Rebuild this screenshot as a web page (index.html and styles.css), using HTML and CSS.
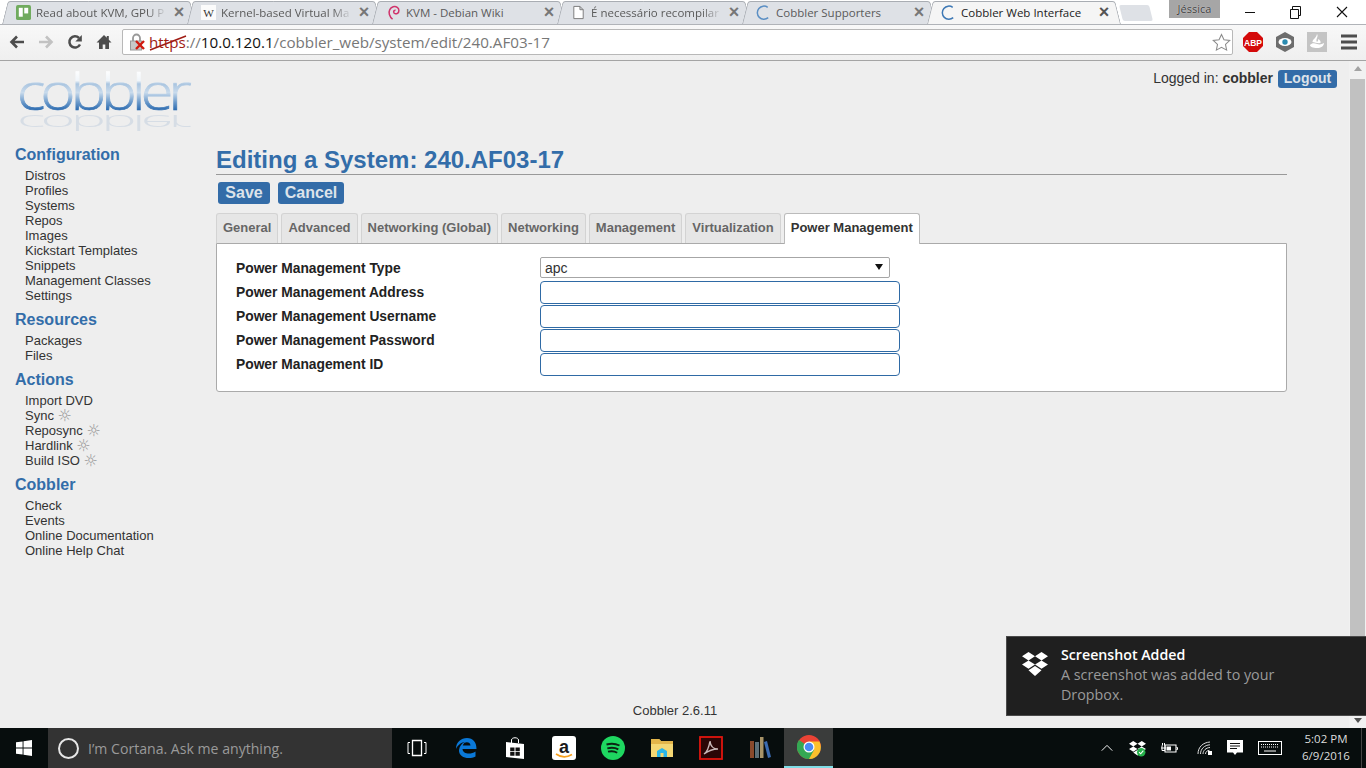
FILE: index.html
```html
<!DOCTYPE html>
<html lang="en">
<head>
<meta charset="utf-8">
<title>Cobbler Web Interface</title>
<link rel="stylesheet" href="styles.css">
</head>
<body>
<div class="desktop">
  <div class="titlebar">
    <div class="tabs">
      <div class="tab">
        <svg class="fav" viewBox="0 0 16 16"><rect width="16" height="16" rx="2" fill="#70ab5e"/><rect x="3" y="3" width="4.2" height="9.5" fill="#fff"/><rect x="8.8" y="3" width="4.2" height="6" fill="#fff"/></svg>
        <span class="tab-title">Read about KVM, GPU P</span><span class="tab-x">×</span>
      </div>
      <div class="tab">
        <svg class="fav" viewBox="0 0 16 16"><rect width="16" height="16" fill="#fbfbfb"/><text x="8" y="13" text-anchor="middle" class="wiki-w">W</text></svg>
        <span class="tab-title">Kernel-based Virtual Ma</span><span class="tab-x">×</span>
      </div>
      <div class="tab">
        <svg class="fav" viewBox="0 0 16 16"><path d="M7 15C3.500 12.500 2.500 8 4 5c1.500-3.200 5.500-4.200 8-2.500 2.300 1.600 2.300 5 .2 6.400-1.700 1.100-3.900.3-4-1.500-.1-1.300 1-2 2-1.800" fill="none" stroke="#d0336b" stroke-width="1.600"/></svg>
        <span class="tab-title">KVM - Debian Wiki</span><span class="tab-x">×</span>
      </div>
      <div class="tab">
        <svg class="fav" viewBox="0 0 16 16"><path d="M3 1.500h6.500L13 5v9.500H3z M9.500 1.500V5H13" fill="#fff" stroke="#777" stroke-width="1"/></svg>
        <span class="tab-title">É necessário recompilar</span><span class="tab-x">×</span>
      </div>
      <div class="tab">
        <svg class="fav" viewBox="0 0 16 16"><path d="M12.500 2.500A7 7 0 1 0 13 13.500" fill="none" stroke="#5b8fc4" stroke-width="1.600"/></svg>
        <span class="tab-title">Cobbler Supporters</span><span class="tab-x">×</span>
      </div>
      <div class="tab tab-active">
        <svg class="fav" viewBox="0 0 16 16"><path d="M12.500 2.500A7 7 0 1 0 13 13.500" fill="none" stroke="#3d78b5" stroke-width="1.600"/></svg>
        <span class="tab-title">Cobbler Web Interface</span><span class="tab-x">×</span>
      </div>
      <div class="newtab"></div>
    </div>
    <div class="profile">Jéssica</div>
    <div class="winctl">
      <svg class="winbtn" viewBox="0 0 46 24"><path d="M18 12.500h10" stroke="#111" stroke-width="1"/></svg>
      <svg class="winbtn" viewBox="0 0 46 24"><path d="M17.500 9.500h8v9h-8z M19.500 9.500v-3h8v9h-2" fill="none" stroke="#111" stroke-width="1"/></svg>
      <svg class="winbtn" viewBox="0 0 46 24"><path d="M18 7l10 10M28 7L18 17" stroke="#111" stroke-width="1.100"/></svg>
    </div>
  </div>

  <div class="toolbar">
    <svg class="navicon nav-first" viewBox="0 0 18 18"><path d="M16 9H4M9 3.500 3.500 9 9 14.500" fill="none" stroke="#4d4d4d" stroke-width="2.600"/></svg>
    <svg class="navicon" viewBox="0 0 18 18"><path d="M2 9h12M9 3.500 14.500 9 9 14.500" fill="none" stroke="#c2c2c2" stroke-width="2.600"/></svg>
    <svg class="navicon" viewBox="0 0 18 18"><path d="M14 11.500A5.600 5.600 0 1 1 13 5" fill="none" stroke="#4d4d4d" stroke-width="2.500"/><path d="M15.800 2v6.500H9.300z" fill="#4d4d4d"/></svg>
    <svg class="navicon" viewBox="0 0 18 18"><path d="M9 2 1.500 9.500H4V16h3.700v-4.500h2.600V16H14V9.500h2.500L13.800 6.800V3h-2v1.800z" fill="#4d4d4d"/></svg>
    <div class="omnibox">
      <svg class="lock" viewBox="0 0 18 20"><path d="M4 9V6a3.500 3.500 0 0 1 7 0v3" fill="none" stroke="#999" stroke-width="1.800"/><rect x="1.500" y="9" width="11" height="9" fill="#c8c8c8" stroke="#999"/><path d="M7 9l8 8M15 9l-8 8" stroke="#d01a10" stroke-width="2.400"/></svg>
      <div class="url"><span class="url-scheme">https</span>://<span class="url-host">10.0.120.1</span>/cobbler_web/system/edit/240.AF03-17<svg class="strike" viewBox="0 0 38 16"><path d="M1 15 37 1" stroke="#a01c14" stroke-width="1.500"/></svg></div>
      <svg class="star" viewBox="0 0 20 20"><path d="M10 1.500l2.600 5.600 6.100.7-4.500 4.200 1.200 6-5.400-3-5.400 3 1.200-6L1.300 7.800l6.100-.7z" fill="#fff" stroke="#8a8a8a" stroke-width="1.100"/></svg>
    </div>
    <div class="exts">
      <svg class="ext" viewBox="0 0 20 20"><path d="M6 0h8l6 6v8l-6 6H6l-6-6V6z" fill="#d40a0a"/><text x="10" y="13.500" text-anchor="middle" class="abp">ABP</text></svg>
      <svg class="ext" viewBox="0 0 20 20"><path d="M10 0l9 5v10l-9 5-9-5V5z" fill="#6d6d6d"/><ellipse cx="10" cy="10" rx="6.500" ry="4" fill="#fff"/><circle cx="10" cy="10" r="2.700" fill="#2b8bb0"/></svg>
      <svg class="ext" viewBox="0 0 20 20"><rect width="20" height="20" fill="#c4c4c4"/><path d="M3 13c2-2 4-2 7-1s5 0 7-1c0 3-3 5-7 5s-7-1-7-3zM10 2c2 3-2 5 0 8 1-1 1.500-2 1-3 2 1 3 2 2.500 4-2 .5-6-.5-8-1 0-3 4-4 4.500-8z" fill="#fff"/></svg>
      <svg class="ext ext-menu" viewBox="0 0 20 20"><path d="M2 4h16M2 10h16M2 16h16" stroke="#4d4d4d" stroke-width="3"/></svg>
    </div>
  </div>

  <div class="viewport">
    <div class="page">
      <aside class="sidebar">
        <svg class="logo" viewBox="0 0 176 64">
          <defs>
            <linearGradient id="logoFill" gradientUnits="userSpaceOnUse" x1="0" y1="0" x2="0" y2="41">
              <stop offset="0" stop-color="#ffffff"/>
              <stop offset="0.26" stop-color="#f0f5fa"/>
              <stop offset="0.34" stop-color="#aac5e0"/>
              <stop offset="0.55" stop-color="#c9dbec"/>
              <stop offset="0.78" stop-color="#6d9bcb"/>
              <stop offset="1" stop-color="#2566ad"/>
            </linearGradient>
          </defs>
          <text x="0" y="39.500" class="logo-text" fill="url(#logoFill)" stroke="url(#logoFill)" textLength="170" lengthAdjust="spacingAndGlyphs">cobbler</text>
          <text x="0" y="-100" class="logo-text logo-mirror" aria-hidden="true" transform="scale(1 -0.45)" textLength="170" lengthAdjust="spacingAndGlyphs">cobbler</text>
        </svg>
        <h2 class="nav-head">Configuration</h2>
        <ul class="nav-list">
          <li>Distros</li><li>Profiles</li><li>Systems</li><li>Repos</li><li>Images</li><li>Kickstart Templates</li><li>Snippets</li><li>Management Classes</li><li>Settings</li>
        </ul>
        <h2 class="nav-head">Resources</h2>
        <ul class="nav-list"><li>Packages</li><li>Files</li></ul>
        <h2 class="nav-head">Actions</h2>
        <ul class="nav-list">
          <li>Import DVD</li>
          <li>Sync <span class="gear">☼</span></li>
          <li>Reposync <span class="gear">☼</span></li>
          <li>Hardlink <span class="gear">☼</span></li>
          <li>Build ISO <span class="gear">☼</span></li>
        </ul>
        <h2 class="nav-head">Cobbler</h2>
        <ul class="nav-list"><li>Check</li><li>Events</li><li>Online Documentation</li><li>Online Help Chat</li></ul>
      </aside>

      <main class="main">
        <div class="userbar"><span class="who">Logged in: <b>cobbler</b></span><button class="btn btn-small" type="button">Logout</button></div>
        <h1 class="title">Editing a System: 240.AF03-17</h1>
        <div class="actions"><button class="btn btn-save" type="button">Save</button><button class="btn btn-cancel" type="button">Cancel</button></div>
        <div class="formtabs">
          <span class="ftab">General</span><span class="ftab">Advanced</span><span class="ftab">Networking (Global)</span><span class="ftab">Networking</span><span class="ftab">Management</span><span class="ftab">Virtualization</span><span class="ftab ftab-active">Power Management</span>
        </div>
        <form class="panel">
          <div class="row"><label>Power Management Type</label><div class="select">apc<span class="caret"></span></div></div>
          <div class="row"><label>Power Management Address</label><input class="field" type="text"></div>
          <div class="row"><label>Power Management Username</label><input class="field" type="text"></div>
          <div class="row"><label>Power Management Password</label><input class="field" type="text"></div>
          <div class="row"><label>Power Management ID</label><input class="field" type="text"></div>
        </form>
        <footer class="footer">Cobbler 2.6.11</footer>
      </main>
    </div>
    <div class="scrollbar">
      <span class="arrow-up"></span>
      <div class="thumb"></div>
      <span class="arrow-down"></span>
    </div>
  </div>

  <div class="taskbar">
    <div class="start"><svg class="winlogo" viewBox="0 0 16 16"><path d="M0 2.300 6.600 1.400V7.500H0zM7.500 1.300 16 0v7.500H7.500zM0 8.500h6.600v6.100L0 13.700zM7.500 8.500H16V16l-8.500-1.300z" fill="#fff"/></svg></div>
    <div class="cortana"><span class="ring"></span><span>I’m Cortana. Ask me anything.</span></div>
    <div class="tasks">
      <div class="task"><svg class="ti" viewBox="0 0 24 24"><path d="M7.500 4.500h9v15h-9z" fill="none" stroke="#fff" stroke-width="1.300"/><path d="M5 6.500H3v11h2M19 6.500h2v11h-2" fill="none" stroke="#fff" stroke-width="1"/></svg></div>
      <div class="task"><svg class="ti" viewBox="0 0 24 24"><path d="M2 13C2 6 7 2 13 2c6 0 9.500 4 9.500 11H8.500c.3 5 8 6 13 2.500v5c-7 3.500-17 1-16.500-6.500C5.500 10 8 7 11 6 6.500 6.500 3.500 9.500 2 13zm6.800-3.500h7.700c0-4.500-7-4.500-7.700 0z" fill="#0a78d7"/></svg></div>
      <div class="task"><svg class="ti" viewBox="0 0 24 24"><path d="M8.500 7V4c0-3 7-3 7 0v3" fill="none" stroke="#fff" stroke-width="1"/><path d="M3 6 21 8v15L3 21z" fill="#fff"/><path d="M7.200 11.500h4.300v3.700H7.200zM12.500 11.500h4.300v3.700h-4.300zM7.200 16h4.300v3.700H7.200zM12.500 16h4.300v3.700h-4.300z" fill="#111"/></svg></div>
      <div class="task"><svg class="ti" viewBox="0 0 24 24"><rect width="24" height="24" rx="3" fill="#fff"/><text x="12" y="16.500" text-anchor="middle" class="amazon">a</text><path d="M4 18c5 3.500 11 3.500 16 .5" fill="none" stroke="#f7a01d" stroke-width="1.600"/></svg></div>
      <div class="task"><svg class="ti" viewBox="0 0 24 24"><circle cx="12" cy="12" r="12" fill="#1ed760"/><path d="M5.500 8.500c4.500-1.300 9-1 13 1M6.300 12.300c4-1 8-.7 11 1M7 15.700c3.300-.8 6.500-.6 9.200 1" fill="none" stroke="#0b2412" stroke-width="1.900"/></svg></div>
      <div class="task"><svg class="ti" viewBox="0 0 24 24"><path d="M1 3h8l2 2h12v16H1z" fill="#f4d774"/><path d="M1 3h8l2 2h12v3H1z" fill="#e3b54a"/><path d="M7 21v-6l5-3 5 3v6h-3.500v-4h-3v4z" fill="#2bb6e8"/></svg></div>
      <div class="task"><svg class="ti" viewBox="0 0 24 24"><rect x="1" y="1" width="22" height="22" fill="#2a0606" stroke="#e0150e" stroke-width="1.800"/><path d="M5 18c3-2 5-7 6-13 .5 6 4 8 8 8-5 0-10 2-14 5z" fill="none" stroke="#c9b8b8" stroke-width="1.400"/></svg></div>
      <div class="task"><svg class="ti" viewBox="0 0 24 24"><rect x="2" y="5" width="4" height="17" fill="#8a4a2c"/><rect x="7" y="6" width="4" height="16" fill="#5d6f78"/><rect x="12" y="1" width="3.500" height="21" fill="#a89468"/><path d="M16 6l3-1 4 16-3 1z" fill="#3b6bb0"/></svg></div>
      <div class="task task-active"><svg class="ti" viewBox="0 0 24 24"><circle cx="12" cy="12" r="12" fill="#ea4335"/><path d="M12 12 1.600 18A12 12 0 0 1 2 5z" fill="#34a853"/><path d="M12 24A12 12 0 0 1 1.600 18L7 9l5 3h11.700A12 12 0 0 1 12 24z" fill="#34a853"/><path d="M12 6.500h10.500A12 12 0 0 1 12 24l5-9z" fill="#fbc02d"/><circle cx="12" cy="12" r="5.500" fill="#fff"/><circle cx="12" cy="12" r="4.300" fill="#4a8af4"/></svg></div>
    </div>
    <div class="tray">
      <svg class="tr tr-caret" viewBox="0 0 16 16"><path d="M2 11l6-6 6 6" fill="none" stroke="#fff" stroke-width="1.100"/></svg>
      <svg class="tr tr-drop" viewBox="0 0 16 16"><path d="M4 1 8 3.500 4 6 0 3.500zM12 1l4 2.500L12 6 8 3.500zM4 6l4 2.500L4 11 0 8.500zM12 6l4 2.500-4 2.500-4-2.500zM4 11.800l4-2.500 4 2.500L8 14.500z" fill="#fff"/><circle cx="11.500" cy="11.500" r="4" fill="#25b04a"/><path d="M9.500 11.500l1.500 1.500 2.500-3" fill="none" stroke="#fff" stroke-width="1"/></svg>
      <svg class="tr tr-power" viewBox="0 0 18 16"><path d="M5 5h11v7H5z" fill="none" stroke="#fff" stroke-width="1.100"/><path d="M6.500 6.500H11v4H6.500z" fill="#fff"/><path d="M1 8h5M2 5.500v5h3v-5M2.500 3v2.500M4.500 3v2.500M16.500 7.500h1v2h-1" fill="none" stroke="#fff" stroke-width="1"/></svg>
      <svg class="tr tr-wifi" viewBox="0 0 16 16"><path d="M1 14C1 7 6 2.500 13 2M3.500 14c0-5 4-9 9.500-9.200M6 14c0-3.500 3-6.300 7-6.500M8.500 14c0-2 1.500-3.500 4-3.700" fill="none" stroke="#ddd" stroke-width="1"/><rect x="11" y="11" width="4" height="4" fill="#fff"/></svg>
      <svg class="tr tr-note" viewBox="0 0 16 16"><path d="M0 0h16v12.500h-6L8 15l-2-2.500H0z" fill="#fff"/><path d="M3 3.500h10M3 6h10M3 8.500h7" stroke="#111" stroke-width="1"/></svg>
      <svg class="tr tr-kbd" viewBox="0 0 24 14"><rect x=".5" y=".5" width="23" height="13" fill="none" stroke="#fff" stroke-width="1"/><path d="M3 3.500h18M3 6h18" stroke="#fff" stroke-width="1" stroke-dasharray="1 1"/><path d="M6 10h12" stroke="#fff" stroke-width="1"/></svg>
      <div class="clock"><span>5:02 PM</span><span>6/9/2016</span></div>
      <div class="showdesk"></div>
    </div>
  </div>

  <div class="toast">
    <svg class="toast-icon" viewBox="0 0 26 24"><path d="M6.500 0 13 4.200 6.500 8.400 0 4.200zM19.500 0 26 4.200l-6.500 4.200L13 4.200zM6.500 8.400 13 12.600l-6.500 4.200L0 12.600zM19.500 8.400l6.500 4.200-6.500 4.200-6.500-4.200zM6.500 18.200 13 14l6.500 4.200L13 24z" fill="#fff"/></svg>
    <div class="toast-body">
      <div class="toast-title">Screenshot Added</div>
      <div class="toast-text">A screenshot was added to your Dropbox.</div>
    </div>
  </div>
</div>
</body>
</html>
```
FILE: styles.css
```css
* { box-sizing: border-box; }
html, body { margin: 0; padding: 0; height: 100%; overflow: hidden; }
body { font-family: "Liberation Sans", Arial, sans-serif; }
.desktop { position: relative; width: 1366px; height: 768px; display: flex; flex-direction: column; overflow: hidden; background: #eee; }

/* browser title bar */
.titlebar { height: 24px; flex: none; display: flex; background: #fff; position: relative; }
.tabs { display: flex; padding-left: 2px; width: 1169px; flex: none; }
.tab { position: relative; width: 194px; height: 24px; margin-right: -9px; padding: 0 11px 0 14px; display: flex; align-items: center; flex: none; font: 11.500px "Open Sans", sans-serif; color: #5a5a5a; }
.tab::before, .tab::after { content: ""; position: absolute; top: 1px; bottom: 0; width: 52%; background: #dee1e6; border-top: 1px solid #a9adb3; z-index: 0; }
.tab::before { left: 0; transform: skewX(-14deg); transform-origin: bottom; border-left: 1px solid #a9adb3; border-top-left-radius: 3px; }
.tab::after { right: 0; transform: skewX(14deg); transform-origin: bottom; border-right: 1px solid #a9adb3; border-top-right-radius: 3px; }
.tab > * { position: relative; z-index: 1; }
.tab-active { z-index: 2; color: #222; }
.tab-active::before, .tab-active::after { background: #f5f5f5; }
.fav { width: 15px; height: 15px; flex: none; margin-right: 5px; }
.wiki-w { font: 12px "Liberation Serif", serif; fill: #333; }
.tab-title { flex: 1; min-width: 0; white-space: nowrap; overflow: hidden; -webkit-mask-image: linear-gradient(to right, #000 85%, transparent 100%); mask-image: linear-gradient(to right, #000 85%, transparent 100%); }
.tab-active .tab-title, .tab:nth-child(3) .tab-title, .tab:nth-child(5) .tab-title { -webkit-mask-image: none; mask-image: none; }
.tab-x { width: 12px; margin-left: 6px; font: bold 18px/16px "Liberation Sans", sans-serif; color: #777; text-align: center; }
.tab-active .tab-x { color: #555; }
.newtab { position: relative; margin: 5px 0 0 9px; width: 30px; height: 16px; flex: none; background: #dee1e6; border-radius: 2px; transform: skewX(14deg); }
.profile { width: 51px; height: 18px; flex: none; background: #a6a6a6; color: #3a3a3a; font: 11px/18px "Open Sans", sans-serif; text-align: center; text-shadow: 0 0 1px #eee; }
.winctl { display: flex; margin-left: 7px; }
.winbtn { width: 46px; height: 24px; flex: none; }

/* browser toolbar */
.toolbar { height: 37px; flex: none; display: flex; align-items: center; padding: 0 8px 1px 0; background: linear-gradient(#f8f8f8, #efefef); border-top: 1px solid #b0b3b8; border-bottom: 1px solid #a4a4a4; }
.navicon { width: 18px; height: 18px; flex: none; margin-left: 11px; }
.nav-first { margin-left: 8px; }
.omnibox { width: 1111px; height: 26px; margin-left: 9px; flex: none; display: flex; align-items: center; background: #fff; border: 1px solid #b8b8b8; border-radius: 2px; padding: 0 1px 0 6px; }
.lock { width: 18px; height: 20px; flex: none; margin-right: 2px; }
.url { position: relative; flex: 1; font: 15.200px "Open Sans", sans-serif; color: #777; white-space: nowrap; }
.url-scheme { color: #a01c14; }
.url-host { color: #111; }
.strike { position: absolute; left: 0; top: 3px; width: 38px; height: 16px; }
.star { width: 19px; height: 19px; flex: none; }
.exts { display: flex; margin-left: 10px; }
.ext { width: 20px; height: 20px; flex: none; margin-right: 12px; }
.ext-menu { margin-right: 0; }
.abp { font: bold 8.500px "Liberation Sans", sans-serif; fill: #fff; }

/* viewport */
.viewport { flex: 1; min-height: 0; display: flex; background: #eee; }
.page { flex: 1; min-width: 0; display: flex; color: #333; }
.sidebar { width: 216px; flex: none; padding: 9px 0 0 15px; }
.logo { display: block; width: 176px; height: 64px; margin: 0 0 11px 2px; overflow: visible; }
.logo-text { font: 300 50px "Open Sans", sans-serif; letter-spacing: -4px; stroke-width: .7px; }
.logo-mirror { fill: #6f94c0; opacity: .18; }
.nav-head { margin: 7px 0 3px; font-size: 16px; line-height: 20px; font-weight: bold; color: #336da9; }
.nav-list { list-style: none; margin: 0; padding: 0 0 0 10px; font-size: 13px; line-height: 15px; color: #333; }
.gear { font: 16px/10px "DejaVu Sans", sans-serif; color: #999; vertical-align: -1px; }

.main { flex: 1; min-width: 0; margin-right: 62px; padding-top: 9px; display: flex; flex-direction: column; }
.userbar { display: flex; justify-content: flex-end; align-items: center; margin-right: -50px; gap: 5px; font-size: 14px; height: 18px; color: #333; }
.who { padding-bottom: 3px; }
.btn { border: 0; margin: 0; background: #336ca8; color: #dde3ea; font: bold 16px "Liberation Sans", sans-serif; border-radius: 3px; height: 22px; padding: 0; }
.btn-save { width: 52px; }
.btn-cancel { width: 66px; }
.btn-small { font-size: 14px; height: 18px; width: 59px; padding-bottom: 3px; }
.title { margin: 58px 0 0; height: 29px; line-height: 28px; font-size: 24px; font-weight: bold; color: #336da9; border-bottom: 1px solid #999; }
.actions { display: flex; gap: 8px; margin: 7px 0 0 2px; }
.formtabs { display: flex; gap: 3px; margin-top: 9px; position: relative; z-index: 1; height: 31px; }
.ftab { height: 30px; padding: 0 6px; font-size: 13px; font-weight: bold; line-height: 28px; color: #666; background: #e6e6e6; border: 1px solid #d3d3d3; border-bottom: 0; border-radius: 3px 3px 0 0; }
.ftab-active { height: 31px; color: #333; background: #fff; border-color: #bbb; }
.panel { margin-top: -1px; height: 149px; padding: 13px 19px; background: #fff; border: 1px solid #aaa; border-radius: 0 0 3px 3px; }
.row { display: flex; align-items: flex-start; height: 24px; }
.row label { width: 304px; flex: none; font-size: 13.800px; line-height: 24px; font-weight: bold; color: #222; }
.select { position: relative; width: 350px; height: 21px; border: 1px solid #a6a6a6; border-radius: 2px; background: #fff; font-size: 14px; line-height: 20px; padding-left: 4px; color: #333; }
.caret { position: absolute; right: 6px; top: 6px; border: 4px solid transparent; border-top: 6px solid #111; border-bottom: 0; }
.field { display: block; width: 360px; height: 23px; margin: 0; border: 1px solid #2f6aa5; border-radius: 4px; background: #fff; }
.footer { margin-top: auto; height: 25px; text-align: center; color: #333; line-height: 15px; padding-right: 153px; font-size: 13px; }

/* scrollbar */
.scrollbar { width: 17px; flex: none; display: flex; flex-direction: column; align-items: center; background: #f1f1f1; padding-top: 5px; }
.arrow-up { flex: none; border: 4px solid transparent; border-bottom: 5px solid #a3a3a3; border-top: 0; }
.thumb { width: 15px; height: 610px; margin-top: 8px; background: #c1c1c1; }
.arrow-down { flex: none; margin-top: auto; margin-bottom: 5px; border: 4px solid transparent; border-top: 5px solid #505050; border-bottom: 0; }

/* taskbar */
.taskbar { height: 40px; flex: none; display: flex; background: #070d0d; color: #fff; }
.start { width: 48px; display: flex; align-items: center; justify-content: center; flex: none; }
.winlogo { width: 16px; height: 16px; }
.cortana { width: 344px; flex: none; display: flex; align-items: center; padding-left: 10px; background: #333; color: #9a9a9a; font: 14.100px "Open Sans", sans-serif; }
.ring { width: 21px; height: 21px; border: 2.500px solid #e6e6e6; border-radius: 50%; margin-right: 9px; }
.tasks { display: flex; flex: 1; }
.task { width: 49px; height: 40px; flex: none; display: flex; align-items: center; justify-content: center; }
.task-active { background: #3a3c3b; border-bottom: 2px solid #7fdde6; }
.ti { width: 24px; height: 24px; }
.amazon { font: bold 18px "Liberation Sans", sans-serif; fill: #1a1a1a; }
.tray { display: flex; align-items: center; width: 268px; flex: none; }
.tr { flex: none; }
.tr-caret { width: 14px; height: 14px; margin-left: 2px; }
.tr-drop { width: 17px; height: 17px; margin-left: 15px; }
.tr-power { width: 18px; height: 16px; margin-left: 14px; }
.tr-wifi { width: 16px; height: 16px; margin-left: 19px; }
.tr-note { width: 16px; height: 16px; margin-left: 14px; }
.tr-kbd { width: 24px; height: 14px; margin-left: 15px; }
.clock { display: flex; flex-direction: column; align-items: center; width: 62px; margin-left: 13px; padding-bottom: 3px; font: 11.500px/17px "Open Sans", sans-serif; color: #ddd; }
.showdesk { width: 1px; height: 40px; background: #444; margin-left: 4px; }

/* notification */
.toast { position: absolute; left: 1006px; top: 636px; width: 360px; height: 80px; display: flex; background: #1f1f1f; border: 1px solid #4a4a4a; border-right: 0; color: #fff; }
.toast-icon { width: 26px; height: 24px; margin: 15px 0 0 15px; flex: none; }
.toast-body { margin-left: 13px; padding-top: 8px; width: 240px; }
.toast-title { font: 600 14.200px/20px "Open Sans", sans-serif; }
.toast-text { font: 14.300px/20px "Open Sans", sans-serif; color: #9a9a9a; }
```
